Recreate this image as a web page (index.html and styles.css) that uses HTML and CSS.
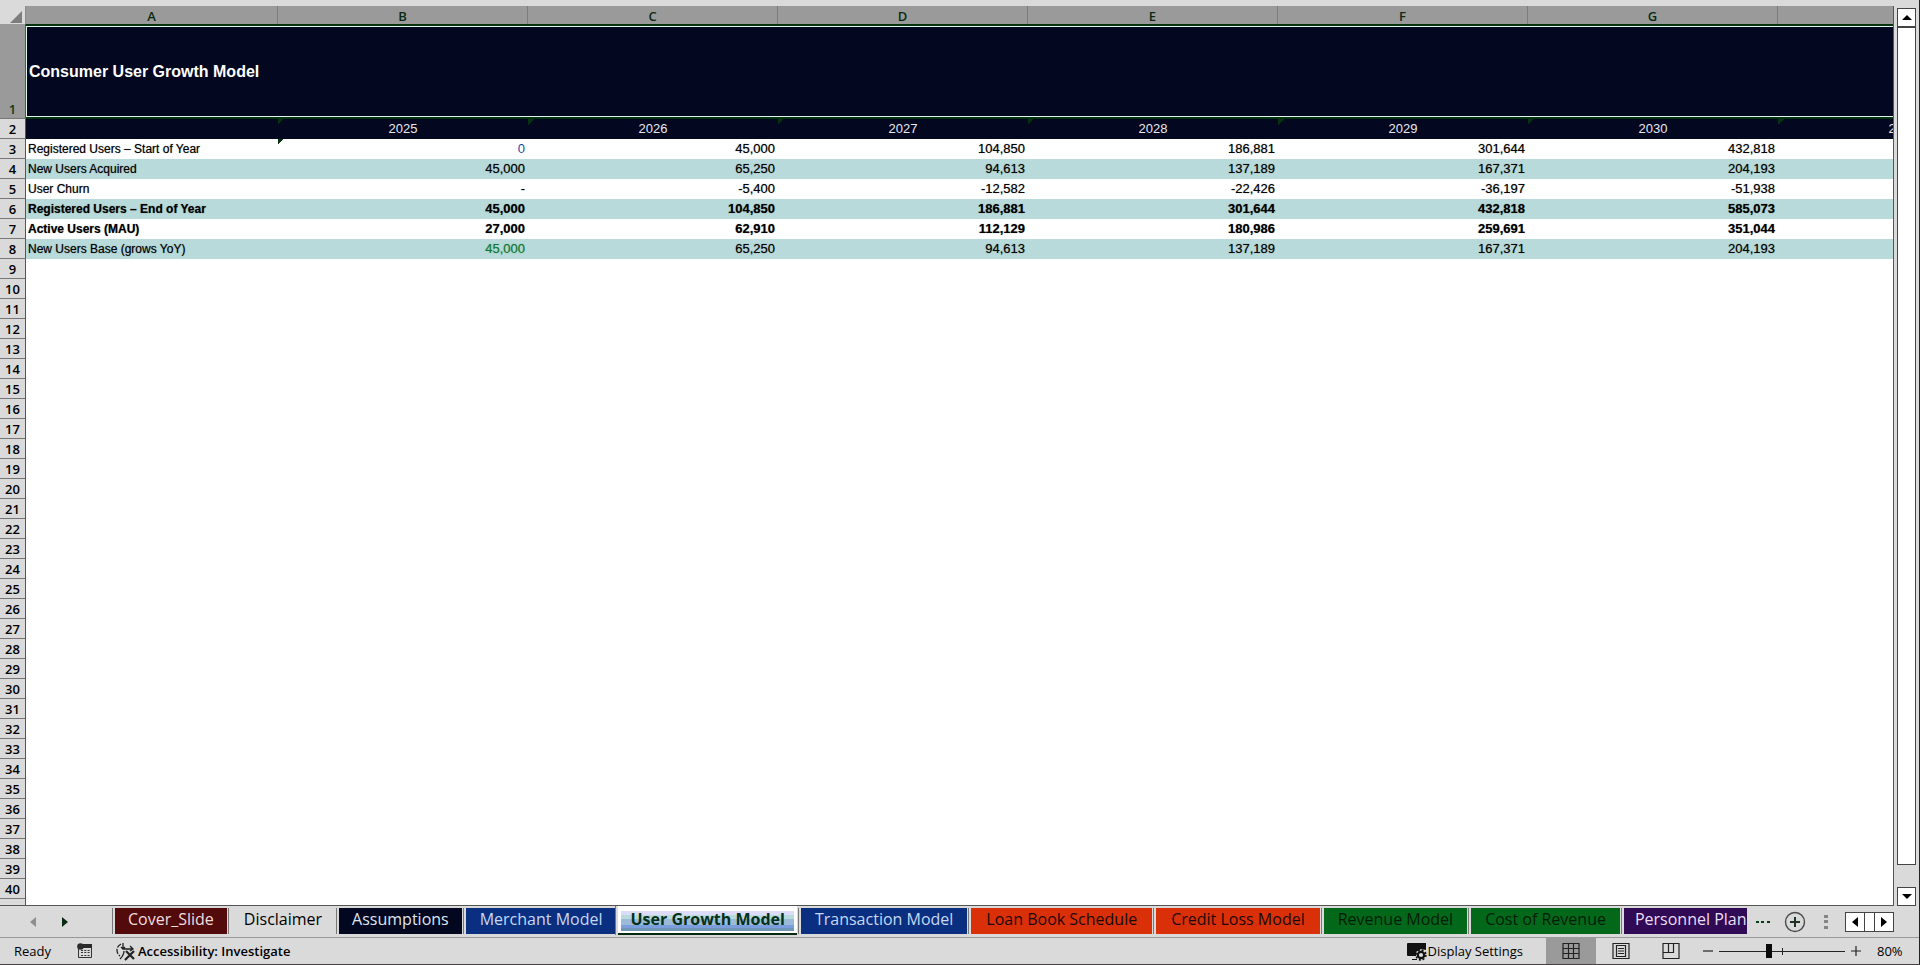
FILE: index.html
```html
<!DOCTYPE html>
<html lang="en">
<head>
<meta charset="utf-8">
<title>Consumer User Growth Model</title>
<link rel="stylesheet" href="styles.css">
</head>
<body>
<main class="workspace">
  <div class="sheet">
    <table class="grid">
      <colgroup><col class="col-num"><col class="col-first"><col><col><col><col><col><col><col></colgroup>
      <thead>
        <tr><th class="corner"><svg width="12" height="12" viewBox="0 0 12 12"><path d="M12 0V12H0Z" fill="#7d7d7d"/></svg></th><th>A</th><th>B</th><th>C</th><th>D</th><th>E</th><th>F</th><th>G</th><th></th></tr>
      </thead>
      <tbody>
        <tr class="title-row"><th>1</th><td colspan="8">Consumer User Growth Model</td></tr>
        <tr class="years"><th>2</th><td></td><td class="flag">2025</td><td class="flag">2026</td><td class="flag">2027</td><td class="flag">2028</td><td class="flag">2029</td><td class="flag">2030</td><td class="flag">2031</td></tr>
        <tr class="data"><th>3</th><td>Registered Users – Start of Year</td><td class="flag input">0</td><td>45,000</td><td>104,850</td><td>186,881</td><td>301,644</td><td>432,818</td><td></td></tr>
        <tr class="data band"><th>4</th><td>New Users Acquired</td><td>45,000</td><td>65,250</td><td>94,613</td><td>137,189</td><td>167,371</td><td>204,193</td><td></td></tr>
        <tr class="data"><th>5</th><td>User Churn</td><td>-</td><td>-5,400</td><td>-12,582</td><td>-22,426</td><td>-36,197</td><td>-51,938</td><td></td></tr>
        <tr class="data band total"><th>6</th><td>Registered Users – End of Year</td><td>45,000</td><td>104,850</td><td>186,881</td><td>301,644</td><td>432,818</td><td>585,073</td><td></td></tr>
        <tr class="data total"><th>7</th><td>Active Users (MAU)</td><td>27,000</td><td>62,910</td><td>112,129</td><td>180,986</td><td>259,691</td><td>351,044</td><td></td></tr>
        <tr class="data band"><th>8</th><td>New Users Base (grows YoY)</td><td class="link">45,000</td><td>65,250</td><td>94,613</td><td>137,189</td><td>167,371</td><td>204,193</td><td></td></tr>
        <tr><th>9</th><td colspan="8"></td></tr>
        <tr><th>10</th><td colspan="8"></td></tr>
        <tr><th>11</th><td colspan="8"></td></tr>
        <tr><th>12</th><td colspan="8"></td></tr>
        <tr><th>13</th><td colspan="8"></td></tr>
        <tr><th>14</th><td colspan="8"></td></tr>
        <tr><th>15</th><td colspan="8"></td></tr>
        <tr><th>16</th><td colspan="8"></td></tr>
        <tr><th>17</th><td colspan="8"></td></tr>
        <tr><th>18</th><td colspan="8"></td></tr>
        <tr><th>19</th><td colspan="8"></td></tr>
        <tr><th>20</th><td colspan="8"></td></tr>
        <tr><th>21</th><td colspan="8"></td></tr>
        <tr><th>22</th><td colspan="8"></td></tr>
        <tr><th>23</th><td colspan="8"></td></tr>
        <tr><th>24</th><td colspan="8"></td></tr>
        <tr><th>25</th><td colspan="8"></td></tr>
        <tr><th>26</th><td colspan="8"></td></tr>
        <tr><th>27</th><td colspan="8"></td></tr>
        <tr><th>28</th><td colspan="8"></td></tr>
        <tr><th>29</th><td colspan="8"></td></tr>
        <tr><th>30</th><td colspan="8"></td></tr>
        <tr><th>31</th><td colspan="8"></td></tr>
        <tr><th>32</th><td colspan="8"></td></tr>
        <tr><th>33</th><td colspan="8"></td></tr>
        <tr><th>34</th><td colspan="8"></td></tr>
        <tr><th>35</th><td colspan="8"></td></tr>
        <tr><th>36</th><td colspan="8"></td></tr>
        <tr><th>37</th><td colspan="8"></td></tr>
        <tr><th>38</th><td colspan="8"></td></tr>
        <tr><th>39</th><td colspan="8"></td></tr>
        <tr><th>40</th><td colspan="8"></td></tr>
        <tr><th>41</th><td colspan="8"></td></tr>
      </tbody>
    </table>
  </div>
  <div class="vscroll">
    <button class="vbtn" aria-label="Scroll up"><svg width="10" height="6" viewBox="0 0 10 6"><path d="M5 0L10 5H0Z"/></svg></button>
    <div class="vthumb"></div>
    <button class="vbtn" aria-label="Scroll down"><svg width="10" height="6" viewBox="0 0 10 6"><path d="M0 0H10L5 5Z"/></svg></button>
  </div>
</main>
<nav class="tabbar">
  <div class="tabnav">
    <button aria-label="Previous sheets"><svg width="6" height="10" viewBox="0 0 6 10"><path d="M6 0V10L0 5Z" fill="#8f8f8f"/></svg></button>
    <button aria-label="Next sheets"><svg width="6" height="10" viewBox="0 0 6 10"><path d="M0 0V10L6 5Z" fill="#0a2a12"/></svg></button>
  </div>
  <div class="tabs">
    <button class="tab maroon">Cover_Slide</button>
    <button class="tab plain">Disclaimer</button>
    <button class="tab navy">Assumptions</button>
    <button class="tab blue">Merchant Model</button>
    <button class="tab active"><span>User Growth Model</span></button>
    <button class="tab blue">Transaction Model</button>
    <button class="tab red">Loan Book Schedule</button>
    <button class="tab red">Credit Loss Model</button>
    <button class="tab green">Revenue Model</button>
    <button class="tab green">Cost of Revenue</button>
    <button class="tab purple">Personnel Plan</button>
  </div>
  <div class="tabtools">
    <button class="more" aria-label="More sheets"><svg width="14" height="4" viewBox="0 0 14 4"><path d="M0 1h3v2H0zM5 1h3v2H5zM11 1h3v2h-3z" fill="#0a3a1a"/></svg></button>
    <button aria-label="New sheet"><svg width="22" height="22" viewBox="0 0 22 22" fill="none"><circle cx="11" cy="11" r="9.5" stroke="#4a4a4a" stroke-width="1.4"/><path d="M11 6v10M6 11h10" stroke="#1e3324" stroke-width="2"/></svg></button>
    <svg class="grip" width="4" height="14" viewBox="0 0 4 14"><path d="M0 0h4v3H0zM0 5h4v3H0zM0 11h4v3H0z" fill="#868686"/></svg>
    <div class="hscroll">
      <button aria-label="Scroll left"><svg width="6" height="10" viewBox="0 0 6 10"><path d="M6 0V10L0 5Z"/></svg></button>
      <span class="hthumb"></span>
      <button aria-label="Scroll right"><svg width="6" height="10" viewBox="0 0 6 10"><path d="M0 0V10L6 5Z"/></svg></button>
    </div>
  </div>
</nav>
<footer class="status">
  <span class="ready">Ready</span>
  <button class="macro" aria-label="Record macro"><svg width="16" height="16" viewBox="0 0 16 16"><path d="M4 2H14.500V14.500H1.500V6" fill="none" stroke="#333" stroke-width="1"/><path d="M4 1H15V5H4Z" fill="#2b2b2b"/><circle cx="3.500" cy="3.500" r="3.300" fill="#2b2b2b"/><path d="M4 7.500h9M4 9.500h9M4 12.500h9" stroke="#333" stroke-dasharray="2 1.300"/></svg></button>
  <button class="access"><svg width="20" height="19" viewBox="0 0 20 19" fill="none" stroke="#222" stroke-width="1.300"><path d="M5 2Q1 4 1 8Q1 12 4 14" stroke-dasharray="5 1.500"/><path d="M7 1V7H16M14 4L17 7L14 9M5 5L7 7M7 7L9 5M8 9Q8 13 4 17"/><path d="M10 9L18 17M18 9L9 18" stroke-width="2.200"/></svg>Accessibility: Investigate</button>
  <span class="spacer"></span>
  <button class="display"><svg width="20" height="19" viewBox="0 0 20 19"><path d="M1 1H19V8L14 7L9 10V14H1Q0 14 0 13V2Q0 1 1 1ZM5 17H10V18H5Z" fill="#111"/><circle cx="14" cy="13" r="3.200" fill="#dadada" stroke="#111" stroke-width="2.200"/><circle cx="14" cy="13" r="4.900" fill="none" stroke="#111" stroke-width="1.600" stroke-dasharray="2 1.848"/></svg>Display Settings</button>
  <button class="view on" aria-label="Normal view"><svg width="18" height="18" viewBox="0 0 18 18"><path d="M1 1.500H17V16.500H1ZM6.500 1V17M11.500 1V17M1 6.500H17M1 11.500H17" fill="none" stroke="#222" stroke-width="1.200"/></svg></button>
  <button class="view" aria-label="Page layout view"><svg width="18" height="18" viewBox="0 0 18 18"><path d="M1 1.500H17V16.500H1ZM4.500 3.500H13.500V14.500H4.500ZM6 6.500H12M6 9H12M6 11.500H12" fill="none" stroke="#222" stroke-width="1.200"/></svg></button>
  <button class="view" aria-label="Page break view"><svg width="18" height="18" viewBox="0 0 18 18"><path d="M1 1.500H17V16.500H1ZM1 10.500H11.500V1.500M6.500 1.500V10.500" fill="none" stroke="#222" stroke-width="1.200"/></svg></button>
  <div class="zoom">
    <button aria-label="Zoom out"><svg width="10" height="10" viewBox="0 0 10 10"><path d="M0 5H10" stroke="#222" stroke-width="1.200"/></svg></button>
    <input class="slider" type="range" min="0" max="100" value="39" aria-label="Zoom">
    <button aria-label="Zoom in"><svg width="10" height="10" viewBox="0 0 10 10"><path d="M0 5H10M5 0V10" stroke="#222" stroke-width="1.200"/></svg></button>
  </div>
  <span class="percent">80%</span>
</footer>
</body>
</html>
```

FILE: styles.css
```css
* { box-sizing: border-box; }
body {
  margin: 0;
  height: 100vh;
  display: flex;
  flex-direction: column;
  overflow: hidden;
  background: #dadada;
  color: #000;
  font-family: "Open Sans", "Noto Sans", sans-serif;
  font-size: 13px;
  border-right: 1px solid #222;
  border-bottom: 1px solid #4a4044;
}
button {
  margin: 0;
  padding: 0;
  border: 0;
  background: none;
  color: inherit;
  font: inherit;
  display: flex;
  align-items: center;
  justify-content: center;
}
svg { display: block; flex: none; }

.workspace { flex: 1; min-height: 0; display: flex; }
.sheet {
  flex: 1;
  min-width: 0;
  margin-top: 6px;
  overflow: hidden;
  background: #fff;
  border-right: 1px solid #555;
  border-bottom: 1px solid #555;
}
.grid {
  width: 2028px;
  table-layout: fixed;
  border-collapse: separate;
  border-spacing: 0;
  font-family: "Liberation Sans", Arial, sans-serif;
}
.col-num { width: 26px; }
.col-first { width: 252px; }
.grid th, .grid td { padding: 0; height: 20px; line-height: 18px; white-space: nowrap; }
.grid th {
  font-family: "Open Sans", "Noto Sans", sans-serif;
  font-size: 13px;
  font-weight: 600;
}
.grid thead th {
  height: 18px;
  padding-top: 2px;
  line-height: 16px;
  background: #9a9a9a;
  color: #0a2a14;
  border-right: 1px solid #7c7c7c;
}
.grid thead .corner { background: #dadada; border-color: #8a8a8a; }
.corner svg { margin: 2px 0 0 10px; }
.grid tbody th {
  background: #dadada;
  border-right: 1px solid #555;
  border-bottom: 1px solid #777;
}
.grid .title-row th {
  background: #9a9a9a;
  color: #0a3a1a;
  height: 95px;
  vertical-align: bottom;
}
.grid .title-row td {
  background: #030720;
  color: #fff;
  border: 2px solid #06330f;
  border-left-width: 0;
  box-shadow: inset 0 0 0 1px #dff3e6;
  font-size: 16px;
  font-weight: 700;
  padding-left: 3px;
}
.years td { background: #030720; color: #e8e8ee; text-align: center; font-size: 13px; }
.data td { text-align: right; padding-right: 3px; font-size: 13px; text-shadow: 0 0 1px rgba(0, 0, 0, 0.5); }
.data td:nth-child(2) { text-align: left; padding-left: 2px; font-size: 12px; }
.band td { background-color: #b8dada; }
.total td { font-weight: 700; }
.data .input { color: #1450a0; text-shadow: none; }
.data .link { color: #127a35; text-shadow: 0 0 1px rgba(18, 122, 53, 0.6); }
.grid .flag {
  background-image: linear-gradient(135deg, #06330f 50%, transparent 50%);
  background-size: 6px 6px;
  background-repeat: no-repeat;
}

.vscroll {
  width: 25px;
  padding: 8px 3px 0;
  display: flex;
  flex-direction: column;
}
.vbtn { height: 19px; flex: none; background: #fff; border: 1px solid #444; }
.vthumb { flex: 1; margin-bottom: 22px; background: #fff; border: 1px solid #444; }

.tabbar { flex: none; height: 32px; display: flex; border-bottom: 1px solid #999; }
.tabnav { flex: none; width: 112px; padding-left: 30px; display: flex; gap: 26px; align-items: center; }
.tabs { flex: 1; min-width: 0; display: flex; overflow: hidden; font-size: 16px; }
.tab {
  flex: none;
  height: 26px;
  margin-top: 2px;
  padding: 0 14px;
  margin-right: 4px;
  white-space: nowrap;
  line-height: 22px;
  align-items: flex-start;
  box-shadow: -2px 0 #dadada, -3px 0 #777;
}
.tab:first-child { margin-left: 3px; }
.maroon, .plain, .navy { padding: 0 13px; }
.maroon { background: #520a0a; color: #f0dede; }
.navy { background: #030720; color: #dfe6f2; }
.blue { background: #0a2f80; color: #c6d8f4; }
.red { background: #da300a; color: #1a0805; padding: 0 15px; }
.green { background: #04681a; color: #021c08; }
.purple { background: #310a55; color: #eadff5; padding: 0 11px; }
.active {
  height: 29px;
  margin-top: 0;
  margin-left: -2px;
  padding: 5px 3px 1px;
  background: #fff;
  border-bottom: 2px solid #042a12;
  color: #05301a;
  font-weight: 700;
}
.active span {
  height: 20px;
  padding: 0 9px;
  line-height: 16px;
  background: linear-gradient(#dcdcfa 0 4px, #b8dada 4px 8px, #9dbbd8 8px 14px, #7a9fdc 14px 17px, #6f95b8 17px);
}
.tabtools { flex: none; display: flex; align-items: center; padding-right: 25px; }
.more { width: 37px; padding-left: 9px; justify-content: flex-start; }
.grip { margin: 0 17px 0 18px; }
.hscroll { display: flex; height: 20px; background: #fff; border: 1px solid #444; }
.hscroll button { width: 18px; }
.hthumb { width: 11px; border: solid #444; border-width: 0 1px; }

.status { flex: none; height: 26px; display: flex; align-items: center; }
.ready { padding-left: 14px; }
.macro { margin-left: 26px; }
.access { margin-left: 23px; gap: 2px; font-weight: 600; }
.spacer { flex: 1; }
.display { margin-right: 23px; gap: 1px; }
.view { width: 50px; align-self: stretch; }
.view.on { background: #9a9a9a; }
.zoom { display: flex; gap: 6px; margin-left: 7px; align-items: center; }
.slider {
  appearance: none;
  width: 126px;
  height: 15px;
  margin: 0;
  background: linear-gradient(#222, #222) 50% 50% / 100% 1px no-repeat, linear-gradient(#222, #222) 50% 50% / 1px 7px no-repeat;
}
.slider::-webkit-slider-thumb { appearance: none; width: 6px; height: 14px; background: #0a0a0a; }
.percent { width: 58px; padding-left: 16px; }
```
